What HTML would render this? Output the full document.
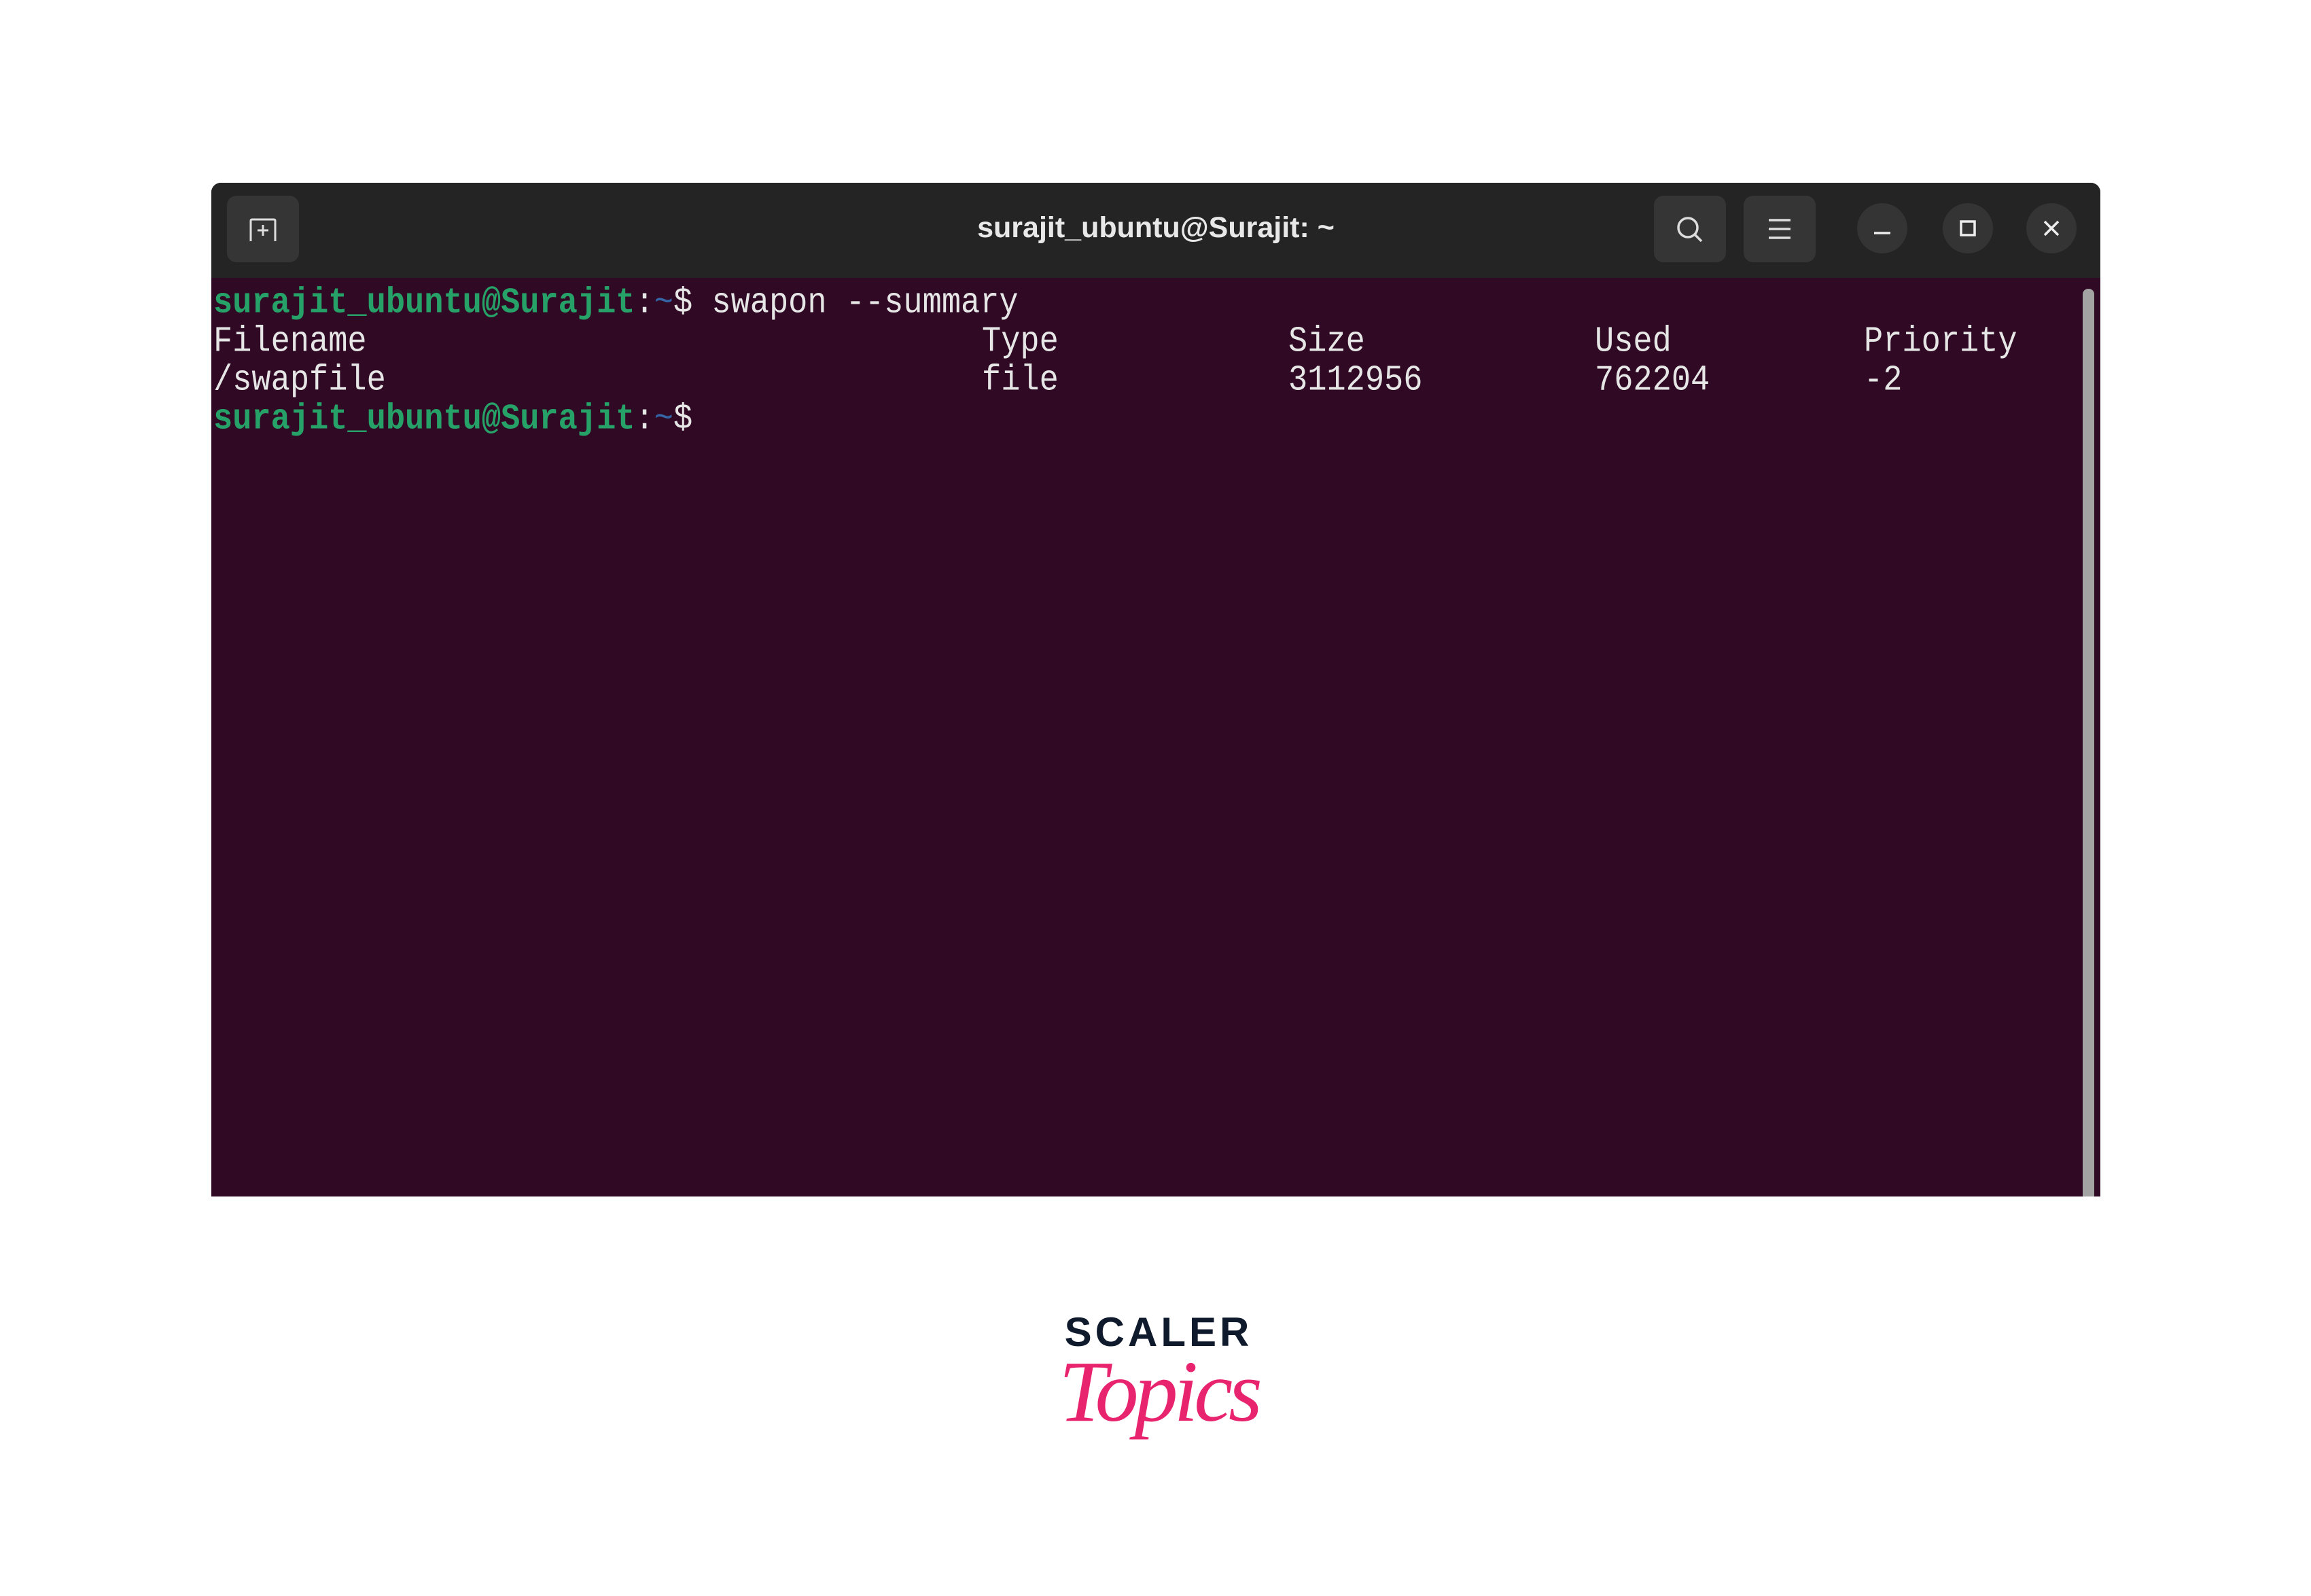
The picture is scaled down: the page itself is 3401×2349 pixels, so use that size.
<!DOCTYPE html>
<html><head><meta charset="utf-8"><style>
html,body{margin:0;padding:0;background:#fff;}
body{width:3401px;height:2349px;position:relative;overflow:hidden;}
.win{position:absolute;left:311px;top:269px;width:2780px;height:1492px;background:#300a24;border-radius:14px 14px 0 0;overflow:hidden;}
.tb{position:absolute;left:0;top:0;width:100%;height:140px;background:#242424;}
.btn{position:absolute;background:#353535;border-radius:14px;}
.circ{position:absolute;width:74px;height:74px;border-radius:50%;background:#343434;}
.title{position:absolute;left:0;width:100%;top:42px;text-align:center;color:#e8e8e8;font:bold 43px "Liberation Sans",sans-serif;}
.t{position:absolute;font:47px/57px "Liberation Mono",monospace;color:#e6e6e6;white-space:pre;transform:scaleY(1.12);transform-origin:0 50%;}
.g{color:#26a269;font-weight:bold;}
.b{color:#3465a4;}
.sb{position:absolute;left:2754px;top:156px;width:17px;height:1340px;background:#a3a3a3;border-radius:8px 8px 0 0;}
</style></head><body>
<div class="win">
 <div class="tb">
  <div class="btn" style="left:23px;top:19px;width:106px;height:98px;"></div>
  <svg style="position:absolute;left:54px;top:50px" width="46" height="40" viewBox="0 0 46 40"><path d="M4 36 V6 Q4 4 6 4 H38 Q40 4 40 6 V36" fill="none" stroke="#ddd" stroke-width="3"/><path d="M22 12 V28 M14 20 H30" stroke="#ddd" stroke-width="3"/></svg>
  <div class="title">surajit_ubuntu@Surajit: ~</div>
  <div class="btn" style="left:2123px;top:19px;width:106px;height:98px;"></div>
  <svg style="position:absolute;left:2153px;top:46px" width="48" height="48" viewBox="0 0 48 48"><circle cx="20" cy="20" r="14" fill="none" stroke="#ddd" stroke-width="3.5"/><path d="M30 30 L40 40" stroke="#ddd" stroke-width="3.5"/></svg>
  <div class="btn" style="left:2255px;top:19px;width:106px;height:98px;"></div>
  <svg style="position:absolute;left:2290px;top:50px" width="36" height="36" viewBox="0 0 36 36"><path d="M2 5 H34 M2 18 H34 M2 31 H34" stroke="#ddd" stroke-width="3.5"/></svg>
  <div class="circ" style="left:2422px;top:30px;"></div>
  <svg style="position:absolute;left:2446px;top:54px" width="26" height="26" viewBox="0 0 26 26"><path d="M1 20 H25" stroke="#eee" stroke-width="3.5"/></svg>
  <div class="circ" style="left:2548px;top:30px;"></div>
  <svg style="position:absolute;left:2573px;top:55px" width="24" height="24" viewBox="0 0 24 24"><rect x="2" y="2" width="20" height="20" fill="none" stroke="#eee" stroke-width="3.5"/></svg>
  <div class="circ" style="left:2671px;top:30px;"></div>
  <svg style="position:absolute;left:2696px;top:55px" width="24" height="24" viewBox="0 0 24 24"><path d="M2 2 L22 22 M22 2 L2 22" stroke="#eee" stroke-width="3.5"/></svg>
 </div>
 <div class="t" style="left:3px;top:149px;"><span class="g">surajit_ubuntu@Surajit</span>:<span class="b">~</span>$ swapon --summary</div>
 <div class="t" style="left:3px;top:206px;">Filename</div>
 <div class="t" style="left:1134px;top:206px;">Type</div>
 <div class="t" style="left:1585px;top:206px;">Size</div>
 <div class="t" style="left:2036px;top:206px;">Used</div>
 <div class="t" style="left:2432px;top:206px;">Priority</div>
 <div class="t" style="left:3px;top:263px;">/swapfile</div>
 <div class="t" style="left:1134px;top:263px;">file</div>
 <div class="t" style="left:1585px;top:263px;">3112956</div>
 <div class="t" style="left:2036px;top:263px;">762204</div>
 <div class="t" style="left:2432px;top:263px;">-2</div>
 <div class="t" style="left:3px;top:320px;"><span class="g">surajit_ubuntu@Surajit</span>:<span class="b">~</span>$</div>
 <div class="sb"></div>
</div>
<div style="position:absolute;left:1550px;top:1926px;width:310px;text-align:center;font:bold 60px 'Liberation Sans',sans-serif;letter-spacing:5px;color:#0f1a2c;">SCALER</div>
<div style="position:absolute;left:1550px;top:1975px;width:310px;text-align:center;font:italic 128px 'Liberation Serif',serif;color:#e8246f;letter-spacing:-6px;">Topics</div>
</body></html>
